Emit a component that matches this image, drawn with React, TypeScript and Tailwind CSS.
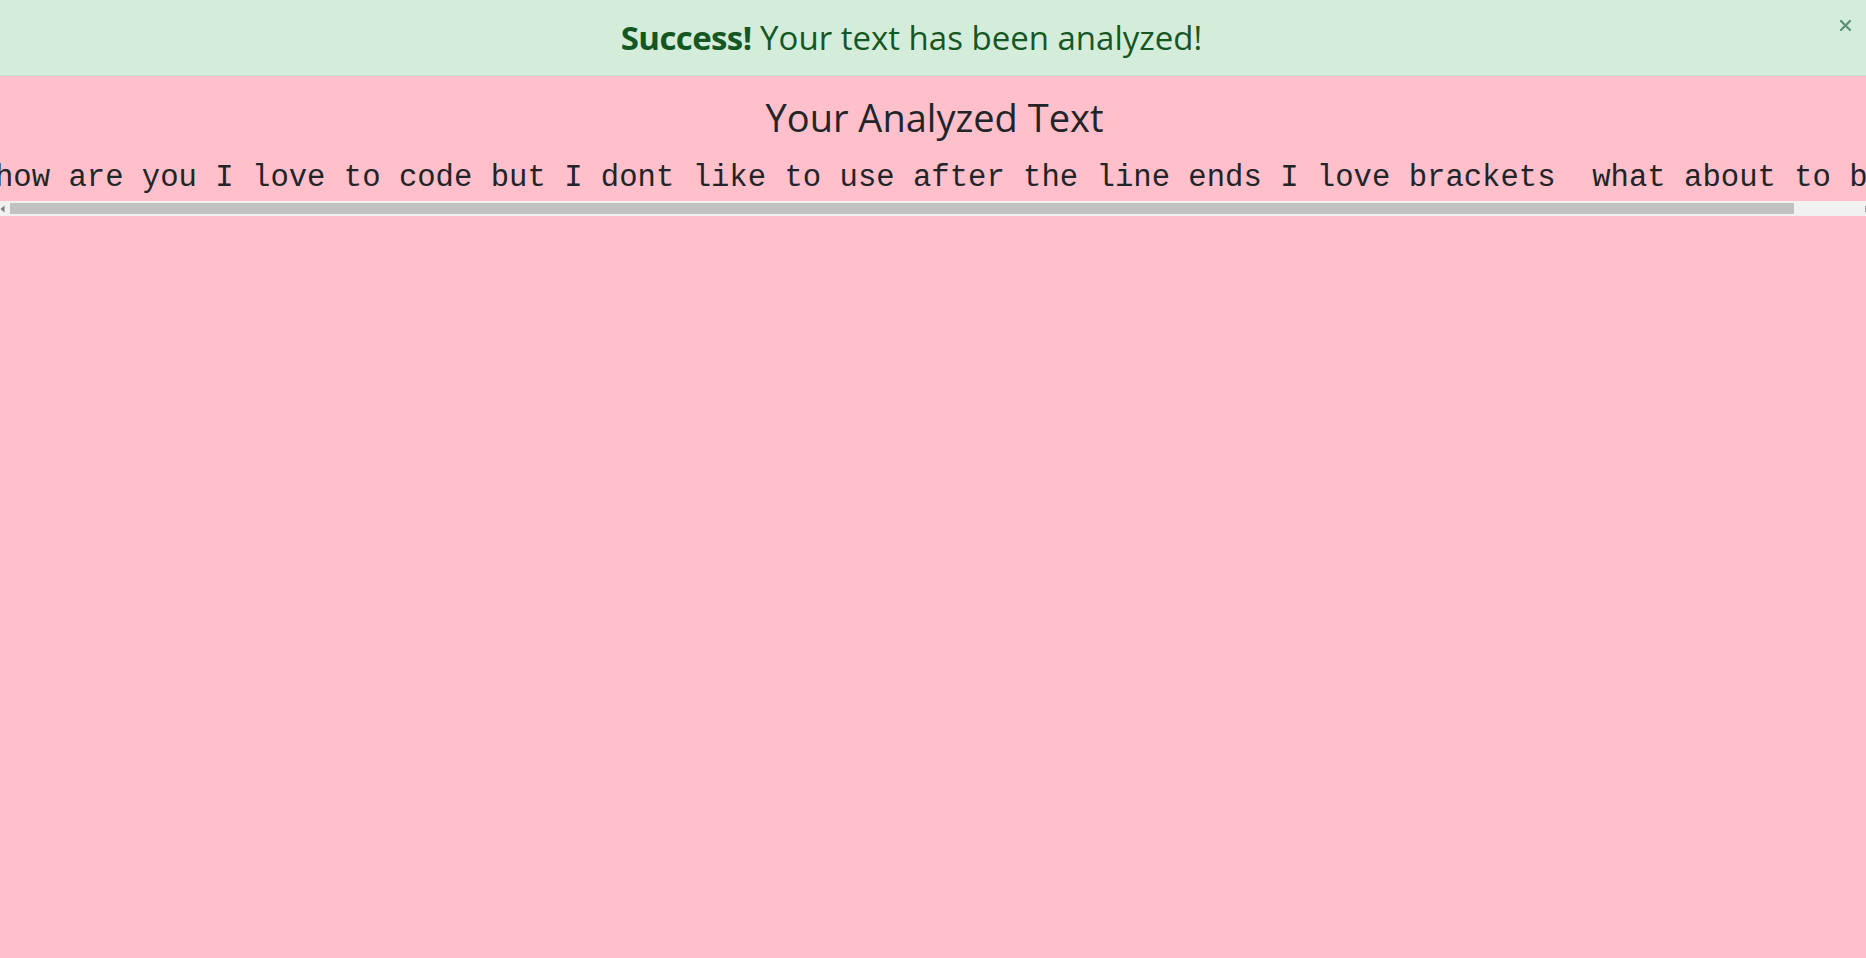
import React from "react";

export default function App() {
  const text =
    "how are you I love to code but I dont like to use after the line ends I love brackets  what about to break the line and keep going";
  return (
    <div className="min-h-[958px] w-full overflow-hidden bg-[#ffc0cb]">
      <div className="relative flex h-[76px] items-start justify-center border-b border-[#c3e6cb] bg-[#d4edda] pr-[43px] text-[#155724]">
        <div
          className="mt-[16px] whitespace-nowrap text-[33px] leading-[44px]"
          style={{ fontFamily: '"Open Sans", "Noto Sans", sans-serif' }}
        >
          <span className="font-bold tracking-[-0.6px]">Success!</span> Your text has been analyzed!
        </div>
        <svg
          className="absolute left-[1840px] top-[20px]"
          width="11"
          height="11"
          viewBox="0 0 11 11"
        >
          <path d="M1 1 L10 10 M10 1 L1 10" stroke="#5d8f78" strokeWidth="2.2" strokeLinecap="square" />
        </svg>
      </div>
      <h1
        className="mt-[17px] pl-[3px] text-center text-[38px] font-normal leading-[48px] text-[#212529]"
        style={{ fontFamily: '"Open Sans", "Noto Sans", sans-serif' }}
      >
        Your Analyzed Text
      </h1>
      <div className="-ml-[5px] mt-[17px] w-[1880px]">
        <div
          className="overflow-hidden whitespace-pre text-[30.6px] leading-[40px] text-[#212529]"
          style={{ fontFamily: '"Liberation Mono", monospace' }}
        >
          {text}
        </div>
        <div className="mt-[3px] flex h-[15px] bg-[#f1f1f1]">
          <div className="flex w-[15px] items-center justify-center">
            <svg width="5" height="8" viewBox="0 0 5 8">
              <path d="M4.5 0.5 L0.5 4 L4.5 7.5 Z" fill="#7a7a7a" />
            </svg>
          </div>
          <div className="mt-[2px] h-[11px] w-[1784px] bg-[#c1c1c1]" />
          <div className="flex-1" />
          <div className="flex w-[15px] items-center justify-center">
            <svg width="5" height="8" viewBox="0 0 5 8">
              <path d="M0.5 0.5 L4.5 4 L0.5 7.5 Z" fill="#505050" />
            </svg>
          </div>
        </div>
      </div>
    </div>
  );
}
